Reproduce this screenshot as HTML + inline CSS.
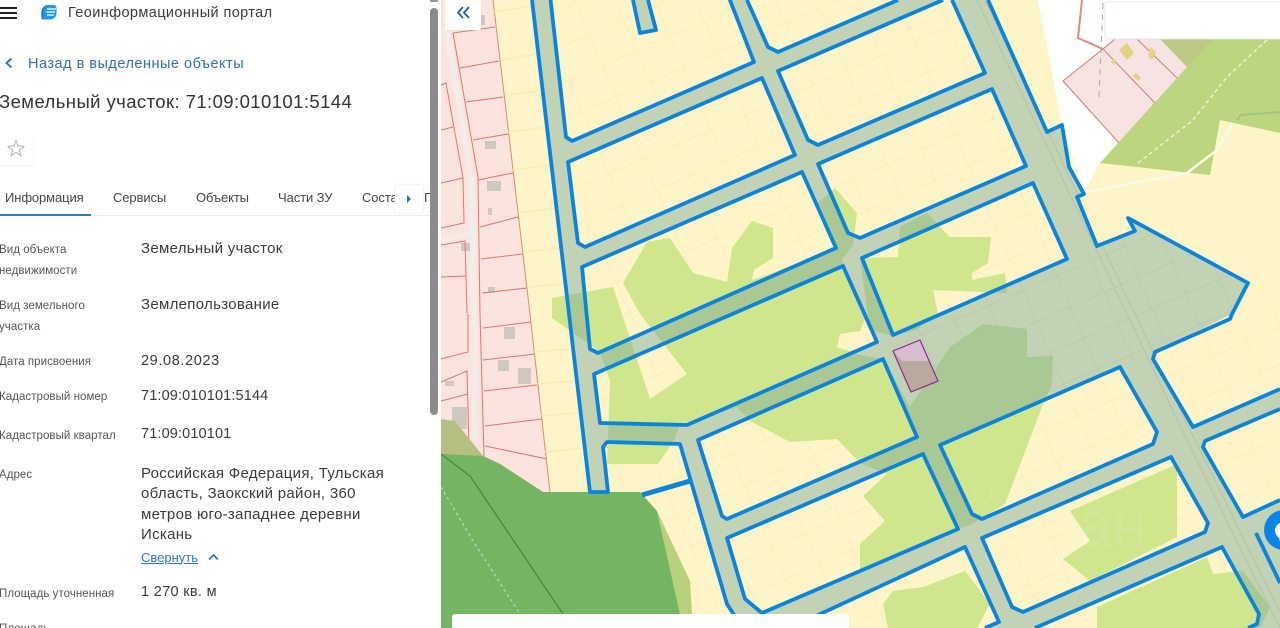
<!DOCTYPE html>
<html lang="ru"><head><meta charset="utf-8"><title>Геоинформационный портал</title>
<style>
html,body{margin:0;padding:0;width:1280px;height:628px;overflow:hidden;background:#fff}
body{position:relative;font-family:"Liberation Sans",sans-serif;color:#333}
#map{position:absolute;left:0;top:0}
#panel{position:absolute;left:0;top:0;width:441px;height:628px;background:#fff;overflow:hidden}
.t{position:absolute;white-space:nowrap;line-height:20px}
.l{font-size:11.5px;color:#555;letter-spacing:.05px}
.v{left:141px;font-size:15px;color:#3a3a3a;letter-spacing:.3px}
.tab{top:187.5px;font-size:13px;color:#444;letter-spacing:-.1px}
</style></head><body>
<svg id="map" width="1280" height="628" viewBox="0 0 1280 628" xmlns="http://www.w3.org/2000/svg">
<defs>
<pattern id="grid" width="37" height="34" patternUnits="userSpaceOnUse" patternTransform="rotate(-23.5 800 300) translate(9 6)">
<rect width="37" height="34" fill="#fdf5c8"/>
<path d="M0 0H37M0 0V34" stroke="#f8ebad" stroke-width="1.2" fill="none"/>
</pattern>
<pattern id="gridr" width="37" height="34" patternUnits="userSpaceOnUse" patternTransform="rotate(-23.5 800 300) translate(9 6)">
<path d="M0 0H37M0 0V34" stroke="#b3c69e" stroke-width="1" fill="none"/>
</pattern>
<clipPath id="rcl"><path clip-rule="evenodd" d="M532,0 988,0 1047,132 1062,125 1069,167 1084,194 1077,197 1097,246 1135,231 1128,218 1248,283 1232,314 1155,352 1153,359 1193,427 1280,389 1280,628 741,628 727,604 680,444 607,442 603,447 608,492 590,492Z
M550,0 566,137 572,141 754,62 728,0Z M568,162 578,243 585,247 795,155 762,78Z M582,267 802,172 836,248 598,353 590,349Z M594,374 843,266 877,342 687,425 600,423Z M698,440 883,359 917,437 727,519 722,516Z M727,538 923,454 958,529 762,613 745,599Z M790,628 965,547 999,622 985,628Z M747,0 768,47 778,52 898,0Z M778,71 943,0 952,0 985,73 818,145 808,140Z M818,164 992,89 1026,166 860,238 848,233Z M862,258 1033,183 1067,259 893,335Z M940,445 1120,367 1157,432 1153,444 982,519 972,514Z M982,538 1171,457 1208,523 1205,532 1023,612 1012,607Z M1035,628 1222,547 1259,614 1257,624 1248,628Z M1205,441 1280,409 1280,500 1243,517 1203,447Z"/></clipPath>
</defs>
<rect width="1280" height="628" fill="#fdf5c8"/>
<!-- top right white -->
<polygon points="1038,0 1280,0 1280,40 1187,67 1100,163 1084,192 1062,125" fill="#fff"/>
<!-- pink parcels top right -->
<polygon points="1115,39 1137,39 1160,39 1213,39 1188,68 1178,79 1155,103 1119,143 1063,81 1103,49" fill="#f8e3e3"/>
<polygon points="1160,39 1213,39 1188,68" fill="#bcc884"/>
<path d="M1063,81 1103,49 1155,103 1119,143Z M1103,49 1115,39 M1137,39 1178,79 M1119,143 1178,79" fill="none" stroke="#c77f72" stroke-width="1"/>
<path d="M1082,0 1078,38 1103,49" fill="none" stroke="#e68880" stroke-width="2"/>
<path d="M1103,3 1099,97" stroke="#a8a8a8" stroke-width="1" stroke-dasharray="6 5"/>
<polygon points="1119,50 1127,43 1134,53 1127,60" fill="#e3d282"/>
<polygon points="1150,47 1156,52 1152,60 1148,56" fill="#e3d282"/>
<polygon points="1136,73 1141,78 1138,81 1133,76" fill="#e3d282"/>
<polygon points="1113,58 1116,60 1114,65 1111,62" fill="#e3d282"/>
<!-- green band -->
<polygon points="1100,163 1187,67 1213,39 1280,39 1280,133 1220,120 1210,175" fill="#bcd57f"/>
<path d="M1138,163 1193,120 1227,77 1267,40" fill="none" stroke="#eef2d0" stroke-width="1.5" stroke-dasharray="4 3"/>
<path d="M1237,120 1241,115 1280,112" fill="none" stroke="#9ec77c" stroke-width="2"/>
<path d="M1087,192 1187,173 1217,150 1233,123" fill="none" stroke="#faf8ea" stroke-width="2.5"/>
<!-- pink left -->
<polygon points="441,0 493,0 530,314 550,492 441,492" fill="#fbe3de"/>
<path d="M447,30 471,177 473,233 441,241 M473,233 475,440" fill="none" stroke="#f4ece8" stroke-width="6"/>
<g fill="#cfc8c0">
<rect x="485" y="141" width="11" height="8"/><rect x="487" y="181" width="14" height="10"/><rect x="488" y="208" width="4" height="7"/>
<rect x="461" y="243" width="9" height="8"/><rect x="504" y="327" width="11" height="12"/><rect x="518" y="368" width="13" height="16"/>
<rect x="498" y="360" width="11" height="11"/><rect x="488" y="287" width="7" height="6"/><rect x="452" y="407" width="15" height="22"/>
<rect x="473" y="15" width="12" height="10"/><rect x="445" y="381" width="9" height="5"/>
</g>
<path d="M453,33 495,27 M460,68 499,61 M466,102 503,97 M473,140 508,134 M478,180 513,173 M480,227 518,217 M481,259 523,254 M482,293 527,288 M483,328 531,322 M483,360 535,354 M484,391 537,385 M485,426 542,419 M485,446 547,459 M453,33 478,177 480,314 484,456 M441,85 446,83 463,178 464,223 441,228 M441,130 453,127 M441,183 463,178 M441,245 465,241 467,313 M441,277 466,276 M441,359 468,352 468,314 M441,382 467,371 469,447 M441,401 468,394 M441,434 483,456 M441,455 470,457" fill="none" stroke="#e4756c" stroke-width="1"/>
<path d="M493,0 530,314 550,492" fill="none" stroke="#e08a70" stroke-width="1"/>
<!-- left yellow strip lines -->
<path d="M494,12 531,6 M502,60 540,53 M505,95 544,90 M508,132 548,127 M513,170 552,165 M518,213 557,208 M523,252 562,248 M527,287 566,284 M531,352 571,349 M534,384 575,381 M537,416 578,413 M542,452 582,448" stroke="#f8ebad" stroke-width="1.2" fill="none"/>
<!-- yellow lower region -->
<polygon points="607,444 680,444 727,604 741,628 692,628 690,581 657,511 640,492 608,492 603,447" fill="url(#grid)"/>
<!-- blocks -->
<g fill="url(#grid)">
<polygon points="550,0 566,137 572,141 754,62 728,0"/>
<polygon points="568,162 578,243 585,247 795,155 762,78"/>
<polygon points="582,267 802,172 836,248 598,353 590,349"/>
<polygon points="594,374 843,266 877,342 687,425 600,423"/>
<polygon points="698,440 883,359 917,437 727,519 722,516"/>
<polygon points="727,538 923,454 958,529 762,613 745,599"/>
<polygon points="790,628 965,547 999,622 985,628"/>
<polygon points="747,0 768,47 778,52 898,0"/>
<polygon points="778,71 943,0 952,0 985,73 818,145 808,140"/>
<polygon points="818,164 992,89 1026,166 860,238 848,233"/>
<polygon points="862,258 1033,183 1067,259 893,335"/>
<polygon points="940,445 1120,367 1157,432 1153,444 982,519 972,514"/>
<polygon points="982,538 1171,457 1208,523 1205,532 1023,612 1012,607"/>
<polygon points="1035,628 1222,547 1259,614 1257,624 1248,628"/>
<polygon points="1155,352 1232,319 1280,300 1280,389 1193,427 1153,359"/>
<polygon points="1205,441 1280,409 1280,500 1243,517 1203,447"/>
</g>
<!-- flat light green -->
<path fill="#cbe488" opacity=".92" d="M552,298 613,287 650,399 680,425 673,442 658,464 607,464 610,381 600,352 552,318Z
M640,314 623,283 647,242 670,238 693,273 727,282 732,248 752,221 773,228 773,258 754,270 752,280 775,272 836,248 843,262 867,314 860,331 840,334 837,347 860,355 883,359 910,407 950,347 983,324 1027,329 1027,357 1053,356 1052,384 1042,407 1005,504 972,524 958,529 860,572 860,544 885,521 863,496 887,474 860,463 837,439 790,442 750,421 737,407 680,425 650,399 687,374Z
M818,203 835,188 857,213 853,245 840,262 827,232Z
M860,258 898,257 900,227 927,213 950,237 991,237 988,263 972,273 972,280 1005,273 1007,293 933,290 938,314 916,330 893,336 870,330Z
M1070,511 1177,464 1177,537 1090,581 1063,559 1090,541Z
M883,604 893,591 923,587 965,571 990,604 977,628 888,628Z
M1097,607 1207,557 1213,574 1243,571 1270,607 1260,628 1097,628Z"/>
<!-- road with holes -->
<path fill="#c1d2b5" fill-rule="evenodd" d="M532,0 988,0 1047,132 1062,125 1069,167 1084,194 1077,197 1097,246 1135,231 1128,218 1248,283 1232,314 1155,352 1153,359 1193,427 1280,389 1280,628 741,628 727,604 680,444 607,442 603,447 608,492 590,492Z
M550,0 566,137 572,141 754,62 728,0Z M568,162 578,243 585,247 795,155 762,78Z M582,267 802,172 836,248 598,353 590,349Z M594,374 843,266 877,342 687,425 600,423Z M698,440 883,359 917,437 727,519 722,516Z M727,538 923,454 958,529 762,613 745,599Z M790,628 965,547 999,622 985,628Z M747,0 768,47 778,52 898,0Z M778,71 943,0 952,0 985,73 818,145 808,140Z M818,164 992,89 1026,166 860,238 848,233Z M862,258 1033,183 1067,259 893,335Z M940,445 1120,367 1157,432 1153,444 982,519 972,514Z M982,538 1171,457 1208,523 1205,532 1023,612 1012,607Z M1035,628 1222,547 1259,614 1257,624 1248,628Z M1205,441 1280,409 1280,500 1243,517 1203,447Z"/>
<polygon points="1097,246 1135,231 1128,218 1248,283 1232,314 1155,352 1120,367 940,445 893,335 1067,259" fill="url(#gridr)"/>
<g clip-path="url(#rcl)">
<path fill="#aac893" d="M552,298 613,287 650,399 680,425 673,442 658,464 607,464 610,381 600,352 552,318Z
M640,314 623,283 647,242 670,238 693,273 727,282 732,248 752,221 773,228 773,258 754,270 752,280 775,272 836,248 843,262 867,314 860,331 840,334 837,347 860,355 883,359 910,407 950,347 983,324 1027,329 1027,357 1053,356 1052,384 1042,407 1005,504 972,524 958,529 860,572 860,544 885,521 863,496 887,474 860,463 837,439 790,442 750,421 737,407 680,425 650,399 687,374Z
M818,203 835,188 857,213 853,245 840,262 827,232Z
M860,258 898,257 900,227 927,213 950,237 991,237 988,263 972,273 972,280 1005,273 1007,293 933,290 938,314 916,330 893,336 870,330Z
M1215,570 1243,571 1270,607 1260,628 1240,628Z"/>
<path d="M977,0 1127,314 1183,432 1280,628 M985,0 1135,314 1191,432 1288,628" stroke="#b2c4a4" stroke-width="1" fill="none"/>
</g>
<polygon points="633,0 640,33 656,30 648,0" fill="#c1d2b5"/>
<!-- forest -->
<polygon points="441,419 455,421 483,456 500,464 543,492 441,492" fill="#b6bf82"/>
<polygon points="657,511 690,581 692,614 680,614" fill="#b9d07c"/>
<polygon points="548,494 558,504 607,494" fill="#a9d29c"/>
<polygon points="441,454 483,456 500,464 543,492 640,492 657,511 680,614 680,628 441,628" fill="#74b564"/>
<path d="M441,454 470,476 563,614" fill="none" stroke="#3f7a38" stroke-width="1"/>
<path d="M441,487 473,541 520,614" fill="none" stroke="#a8d5ac" stroke-width="1.5" stroke-dasharray="3 3"/>
<!-- blue outlines -->
<g fill="none" stroke="#0b84dc" stroke-width="3.8" stroke-linejoin="round">
<polygon points="550,-5 566,137 572,141 754,62 728,-5"/>
<path d="M532,0 590,492 608,492 603,447 607,442 680,444 727,604 745,632"/>
<path d="M633,0 640,33 656,30 648,0"/>
<polygon points="568,162 578,243 585,247 795,155 762,78"/>
<polygon points="582,267 802,172 836,248 598,353 590,349"/>
<polygon points="594,374 843,266 877,342 687,425 600,423"/>
<polygon points="698,440 883,359 917,437 727,519 722,516"/>
<polygon points="727,538 923,454 958,529 762,613 745,599"/>
<path d="M790,628 965,547 999,622 985,628"/>
<path d="M747,0 768,47 778,52 898,0"/>
<path d="M943,0 778,71 808,140 818,145 985,73 952,0"/>
<polygon points="818,164 992,89 1026,166 860,238 848,233"/>
<polygon points="862,258 1033,183 1067,259 893,335"/>
<polygon points="940,445 1120,367 1157,432 1153,444 982,519 972,514"/>
<polygon points="982,538 1171,457 1208,523 1205,532 1023,612 1012,607"/>
<path d="M1035,628 1222,547 1259,614 1257,624 1248,628"/>
<path d="M988,0 1047,132 1062,125 1069,167 1084,194 1077,197 1097,246 1135,231 1128,218 1248,283 1232,314 1230,319 1155,352 1153,359 1193,427 1280,389"/>
<path d="M1280,409 1205,441 1203,447 1243,517 1280,500"/>
<path d="M1256,533 1280,583"/>
</g>
<path d="M642,495 690,481" stroke="#0b84dc" stroke-width="5" fill="none"/>
<!-- purple parcel -->
<polygon points="893,351 920,340 938,381 911,392" fill="#b8ab9e"/>
<polygon points="893,351 920,340 930,361 902,361" fill="#d6bdd0"/>
<polygon points="893,351 920,340 938,381 911,392" fill="none" stroke="#8e2b8c" stroke-width="1.2"/>
<!-- watermark -->
<text x="1078" y="546" font-family="Liberation Sans" font-size="62" fill="#fff" opacity=".08">ан</text>
<circle cx="983" cy="493" r="9" fill="none" stroke="#fff" stroke-width="3" opacity=".08"/>
<!-- right icon -->
<circle cx="1284" cy="530" r="20" fill="#0b84e6"/>
<path d="M1275,530 a9,9 0 0 1 10,-8 V544 l-5,-3 l-1,-3 a10,10 0 0 1 -4,-8Z" fill="#fff"/>
<!-- white boxes -->
<rect x="1105" y="2" width="180" height="37" rx="2" fill="#fff" stroke="#dfe6ef"/>
<rect x="452" y="614" width="397" height="20" rx="3" fill="#fff"/>
<rect x="445" y="-2" width="36" height="32" rx="2" fill="#fff"/>
<path d="M463,7 458,12.5 463,18 M469,7 464,12.5 469,18" fill="none" stroke="#1c5fb0" stroke-width="1.8"/>
</svg>
<div id="panel">
<div style="position:absolute;left:0;top:6.5px;width:17px;height:2px;background:#222"></div>
<div style="position:absolute;left:0;top:12px;width:17px;height:2px;background:#222"></div>
<div style="position:absolute;left:0;top:17px;width:17px;height:2px;background:#222"></div>
<svg style="position:absolute;left:40px;top:4px" width="18" height="17" viewBox="0 0 18 17"><path d="M2,15.5 C0.5,9 1.5,1.5 8,1 H14 C15.5,1 16.5,2.5 16.5,4 V9 C16.5,13 13.5,15.5 10,15.5Z" fill="#1d9be6"/><path d="M7,5 H16 M6.5,8 H15 M7,11 H14" stroke="#fff" stroke-width="1.3" fill="none"/><path d="M8,1 C3,2 2,9 3,15.5 H2 C0.5,9 1.5,1.5 8,1Z" fill="#1668c4"/></svg>
<div class="t" style="left:68px;top:3px;font-size:14.5px;letter-spacing:.4px;color:#3a3a3a">Геоинформационный портал</div>
<svg style="position:absolute;left:4px;top:57px" width="10" height="12" viewBox="0 0 10 12"><path d="M7.5,1.5 2.5,6 7.5,10.5" fill="none" stroke="#2a78c0" stroke-width="1.9"/></svg>
<div class="t" style="left:28px;top:53.5px;font-size:14.5px;letter-spacing:.5px;color:#2f70b3">Назад в выделенные объекты</div>
<div class="t" style="left:-1px;top:91.5px;font-size:18.5px;letter-spacing:.42px;color:#333">Земельный участок: 71:09:010101:5144</div>
<div style="position:absolute;left:-6px;top:133px;width:39px;height:32px;background:#fff;box-shadow:0 1px 2px rgba(0,0,0,.07);border-radius:2px"></div>
<svg style="position:absolute;left:7px;top:139px" width="18" height="18" viewBox="0 0 18 18"><path d="M9,1.5 11.1,7 17,7.3 12.4,11 14,16.7 9,13.5 4,16.7 5.6,11 1,7.3 6.9,7Z" fill="none" stroke="#b0b0b0" stroke-width="1"/></svg>
<div class="t tab" style="left:5px">Информация</div>
<div class="t tab" style="left:113px">Сервисы</div>
<div class="t tab" style="left:196px">Объекты</div>
<div class="t tab" style="left:278px">Части ЗУ</div>
<div class="t tab" style="left:362px;width:34px;overflow:hidden">Состав</div>
<div class="t tab" style="left:424px">Г</div>
<div style="position:absolute;left:0;top:215px;width:430px;height:1px;background:#e8ebef"></div>
<div style="position:absolute;left:0;top:214px;width:91px;height:2px;background:#2a7bd0"></div>
<div style="position:absolute;left:395px;top:185px;width:28px;height:28px;background:#fff;box-shadow:0 0 2px rgba(0,0,0,.15);border-radius:2px"></div>
<div style="position:absolute;left:407px;top:195px;width:0;height:0;border-left:4px solid #2a6fc0;border-top:4px solid transparent;border-bottom:4px solid transparent"></div>
<div class="t l" style="left:-1px;top:240px">Вид объекта</div>
<div class="t l" style="left:-1px;top:261px">недвижимости</div>
<div class="t v" style="top:239px">Земельный участок</div>
<div class="t l" style="left:-1px;top:296px">Вид земельного</div>
<div class="t l" style="left:-1px;top:317px">участка</div>
<div class="t v" style="top:295px">Землепользование</div>
<div class="t l" style="left:-1px;top:352px">Дата присвоения</div>
<div class="t v" style="top:351px;font-size:14.5px;letter-spacing:.62px">29.08.2023</div>
<div class="t l" style="left:-1px;top:387px">Кадастровый номер</div>
<div class="t v" style="top:386px;font-size:14.5px;letter-spacing:.14px">71:09:010101:5144</div>
<div class="t l" style="left:-1px;top:426px">Кадастровый квартал</div>
<div class="t v" style="top:424px;font-size:14.5px;letter-spacing:.14px">71:09:010101</div>
<div class="t l" style="left:-1px;top:465px">Адрес</div>
<div class="t v" style="top:464px">Российская Федерация, Тульская</div>
<div class="t v" style="top:484px">область, Заокский район, 360</div>
<div class="t v" style="top:505px">метров юго-западнее деревни</div>
<div class="t v" style="top:525px">Искань</div>
<div class="t" style="left:141px;top:547.5px;font-size:13px;color:#2a78c8;text-decoration:underline">Свернуть</div>
<svg style="position:absolute;left:208px;top:553px" width="11" height="8" viewBox="0 0 11 8"><path d="M1,6.5 5.5,2 10,6.5" fill="none" stroke="#2a6fb8" stroke-width="1.6"/></svg>
<div class="t l" style="left:-1px;top:584px">Площадь уточненная</div>
<div class="t v" style="top:582px;font-size:14.5px;letter-spacing:.32px">1 270 кв. м</div>
<div class="t l" style="left:-1px;top:619px">Площадь</div>
<div class="t v" style="top:619px">-</div>
<div style="position:absolute;left:430px;top:8px;width:8px;height:407px;background:#8c8c8c;border-radius:4px"></div>
<div style="position:absolute;left:430px;top:0;width:8px;height:2px;background:#9a9a9a"></div>
</div>
</body></html>
